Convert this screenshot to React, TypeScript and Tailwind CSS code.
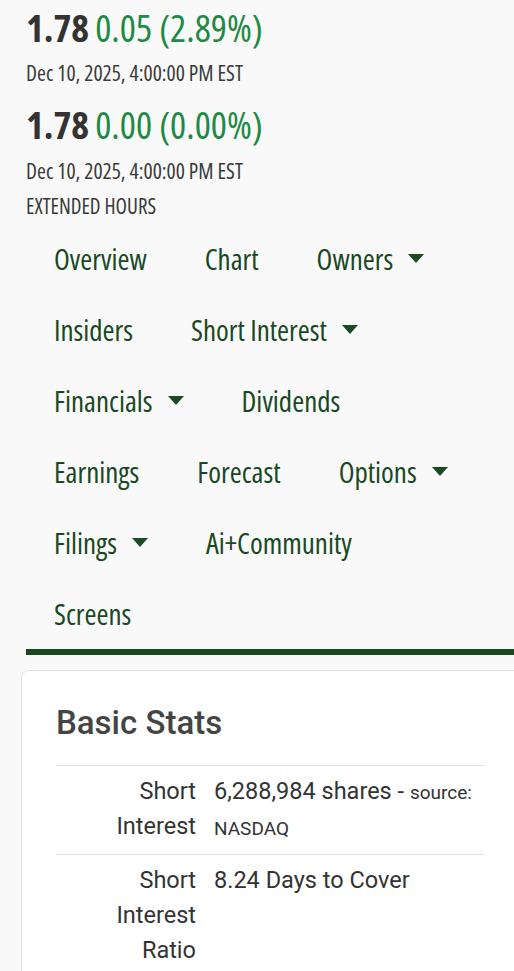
type NavItem = { label: string; menu?: boolean };

const rows: NavItem[][] = [
  [{ label: "Overview" }, { label: "Chart" }, { label: "Owners", menu: true }],
  [{ label: "Insiders" }, { label: "Short Interest", menu: true }],
  [{ label: "Financials", menu: true }, { label: "Dividends" }],
  [{ label: "Earnings" }, { label: "Forecast" }, { label: "Options", menu: true }],
  [{ label: "Filings", menu: true }, { label: "Ai+Community" }],
  [{ label: "Screens" }],
];

const Caret = () => (
  <svg width="16" height="9" viewBox="0 0 16 9" className="ml-[15px] shrink-0">
    <path d="M0 0h16L8 9z" fill="#1b4a25" />
  </svg>
);

const Quote = ({ change }: { change: string }) => (
  <div className="flex items-baseline leading-[48px]">
    <span className="text-[38px] font-bold text-[#333333]">1.78</span>
    <span className="ml-[6px] text-[38px] text-[#1e8a46]">{change}</span>
  </div>
);

export default function App() {
  return (
    <div className="min-h-screen overflow-hidden bg-[#f9f9f9]">
      <div className="pl-[26px] pt-[3px] font-['Open_Sans',sans-serif] font-stretch-condensed">
        <Quote change="0.05 (2.89%)" />
        <div className="mt-[4px] text-[21.5px] leading-[36px] text-[#3a3a3a]">Dec 10, 2025, 4:00:00 PM EST</div>
        <div className="mt-[9px]">
          <Quote change="0.00 (0.00%)" />
        </div>
        <div className="mt-[5px] text-[21.5px] leading-[36px] text-[#3a3a3a]">Dec 10, 2025, 4:00:00 PM EST</div>
        <div className="text-[21px] leading-[34px] text-[#3a3a3a]">EXTENDED HOURS</div>
      </div>

      {/* section tabs */}
      <nav className="ml-[26px] border-b-[6px] border-[#1b4721] font-['Open_Sans',sans-serif] font-stretch-condensed">
        {rows.map((row, i) => (
          <ul key={i} className="flex h-[71px] items-center">
            {row.map((item) => (
              <li key={item.label} className="flex items-center pl-[28px] pr-[30px] text-[29px] text-[#1a4824]">
                {item.label}
                {item.menu && <Caret />}
              </li>
            ))}
          </ul>
        ))}
      </nav>

      <section className="ml-[21px] mt-[15px] w-[498px] rounded-tl-[8px] border border-[#e3e3e3] bg-white px-[34px] pb-[30px] pt-[30px] font-['Roboto',sans-serif]">
        <h2 className="text-[33px] font-medium leading-[44px] text-[#444444]">Basic Stats</h2>
        <table className="mt-[20px] w-full table-fixed border-collapse text-[23.5px] text-[#333333]">
          <tbody>
            <tr className="border-t border-[#e0e0e0]">
              <th className="w-[140px] py-[8px] pl-[30px] text-right align-top font-normal leading-[35px]">Short Interest</th>
              <td className="py-[8px] pl-[18px] align-top leading-[35px]">
                <span>6,288,984 shares - </span>
                <span className="text-[19px]">source:</span>{" "}
                <span className="text-[19px]">NASDAQ</span>
              </td>
            </tr>
            <tr className="border-t border-[#e0e0e0]">
              <th className="w-[140px] py-[8px] pl-[30px] text-right align-top font-normal leading-[35px]">Short Interest Ratio</th>
              <td className="py-[8px] pl-[18px] align-top leading-[35px]">8.24 Days to Cover</td>
            </tr>
          </tbody>
        </table>
      </section>
    </div>
  );
}
